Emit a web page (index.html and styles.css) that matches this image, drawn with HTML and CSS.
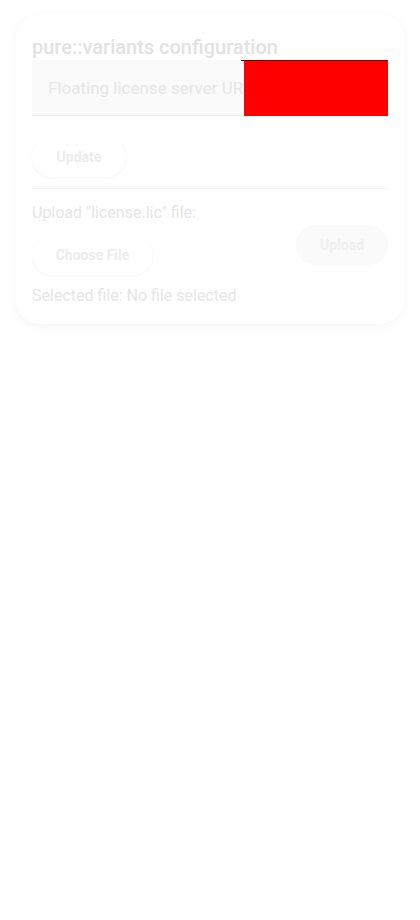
FILE: index.html
```html
<!DOCTYPE html>
<html>
<head>
<meta charset="utf-8">
<link rel="stylesheet" href="styles.css">
</head>
<body>
<div class="card">
  <h2 class="title">pure::variants configuration</h2>
  <div class="field">
    <input class="input" type="text" placeholder="Floating license server URL">
    <div class="redact"></div>
  </div>
  <button class="btn btn-raised update">Update</button>
  <hr class="divider">
  <div class="upload-row">
    <div class="upload-left">
      <div class="label">Upload "license.lic" file:</div>
      <button class="btn btn-raised choose">Choose File</button>
    </div>
    <button class="btn btn-flat upload">Upload</button>
  </div>
  <div class="selected">Selected file: No file selected</div>
</div>
</body>
</html>
```

FILE: styles.css
```css
html, body {
  margin: 0;
  padding: 0;
  background: #ffffff;
  font-family: Roboto, "Liberation Sans", sans-serif;
}
body {
  padding: 14px 16px;
}
.card {
  background: #ffffff;
  border-radius: 24px;
  box-shadow: 0 3px 12px rgba(0,0,0,0.035), 0 0 1px rgba(0,0,0,0.03);
  padding: 20px 16px 18px 16px;
}
.title {
  margin: 0;
  font-size: 20px;
  font-weight: 500;
  line-height: 26px;
  color: #e2e2e2;
}
.field {
  position: relative;
  height: 56px;
}
.input {
  box-sizing: border-box;
  width: 100%;
  height: 56px;
  border: none;
  border-bottom: 1px solid #e8e8e8;
  background: #fafafa;
  padding: 0 16px;
  font-family: Roboto, "Liberation Sans", sans-serif;
  font-size: 17px;
  outline: none;
}
.input::placeholder {
  color: #e6e6e6;
}
.redact {
  position: absolute;
  left: 212px;
  right: 0;
  top: 0;
  bottom: 0;
  background: #ff0000;
}
.redact::before {
  content: "";
  position: absolute;
  left: -3px;
  right: 1px;
  top: 0;
  height: 1px;
  background: #7a0000;
}
.btn {
  font-family: Roboto, "Liberation Sans", sans-serif;
  font-size: 14px;
  font-weight: 700;
  color: #ececec;
  border: none;
  border-radius: 20px;
  height: 40px;
  padding: 0 24px;
  background: #ffffff;
  cursor: pointer;
}
.btn-raised {
  box-shadow: 0 1px 3px rgba(0,0,0,0.04), 0 0 1px rgba(0,0,0,0.03);
}
.btn-flat {
  background: #fafafa;
  color: #f0f0f0;
}
.update {
  margin-top: 21px;
  width: 94px;
  padding: 0;
  display: block;
}
.divider {
  border: none;
  border-top: 1px solid #f4f4f4;
  margin: 11px 0 0 0;
}
.upload-row {
  display: flex;
  justify-content: space-between;
  align-items: flex-end;
}
.upload-left {
  display: flex;
  flex-direction: column;
  align-items: flex-start;
}
.label {
  margin-top: 14px;
  font-size: 16px;
  line-height: 20px;
  color: #e6e6e6;
}
.choose {
  margin-top: 12px;
  width: 121px;
  padding: 0;
}
.upload {
  width: 92px;
  padding: 0;
  margin-bottom: 10px;
}
.selected {
  margin-top: 11px;
  font-size: 16px;
  line-height: 20px;
  color: #e6e6e6;
}
```
